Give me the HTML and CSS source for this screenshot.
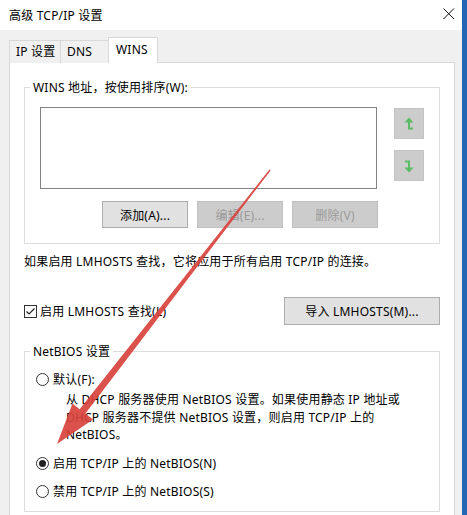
FILE: index.html
```html
<!DOCTYPE html>
<html lang="zh-CN">
<head>
    <meta charset="UTF-8">
    <title>高级 TCP/IP 设置</title>
    <link rel="stylesheet" href="styles.css">
</head>
<body>
    <div class="window">
        <div class="titlebar">
            <span class="title">高级 TCP/IP 设置</span>
            <span class="close">
                <svg width="12" height="12" viewBox="0 0 12 12"><path d="M0.5 0.5 L11 11 M11 0.5 L0.5 11" stroke="#111" stroke-width="1" fill="none"/></svg>
            </span>
        </div>

        <div class="main">
            <div class="tabs">
                <div class="tab tab-ip">IP 设置</div>
                <div class="tab tab-dns">DNS</div>
                <div class="tab tab-wins active">WINS</div>
            </div>

            <div class="panel">
                <fieldset class="group group-wins">
                    <legend>WINS 地址，按使用排序(W):</legend>
                    <div class="list-row">
                        <div class="listbox"></div>
                        <div class="move-btns">
                            <button class="move-btn">
                                <svg width="12" height="16" viewBox="0 0 12 16"><path d="M6 5 V12.5 H10" stroke="#5dbb66" stroke-width="2" fill="none"/><polygon points="1.5,6.5 6,1.5 10.5,6.5" fill="#5dbb66"/></svg>
                            </button>
                            <button class="move-btn">
                                <svg width="12" height="16" viewBox="0 0 12 16"><path d="M2 3.5 H6 V11" stroke="#5dbb66" stroke-width="2" fill="none"/><polygon points="1.5,9.5 6,14.5 10.5,9.5" fill="#5dbb66"/></svg>
                            </button>
                        </div>
                    </div>
                    <div class="btn-row">
                        <button class="btn">添加(A)...</button>
                        <button class="btn" disabled>编辑(E)...</button>
                        <button class="btn" disabled>删除(V)</button>
                    </div>
                </fieldset>

                <p class="info">如果启用 LMHOSTS 查找，它将应用于所有启用 TCP/IP 的连接。</p>

                <div class="lm-row">
                    <label class="check">
                        <span class="box">
                            <svg width="11" height="11" viewBox="0 0 11 11"><polyline points="1.5,5.5 4,8 9.5,2.5" stroke="#222" stroke-width="1.2" fill="none"/></svg>
                        </span>
                        启用 LMHOSTS 查找(L)
                    </label>
                    <button class="btn btn-import">导入 LMHOSTS(M)...</button>
                </div>

                <fieldset class="group group-netbios">
                    <legend>NetBIOS 设置</legend>
                    <label class="radio"><span class="dot"></span>默认(F):</label>
                    <p class="desc">从 DHCP 服务器使用 NetBIOS 设置。如果使用静态 IP 地址或<br>DHCP 服务器不提供 NetBIOS 设置，则启用 TCP/IP 上的<br>NetBIOS。</p>
                    <label class="radio on"><span class="dot"></span>启用 TCP/IP 上的 NetBIOS(N)</label>
                    <label class="radio"><span class="dot"></span>禁用 TCP/IP 上的 NetBIOS(S)</label>
                </fieldset>
            </div>
        </div>

        <!-- red annotation arrow drawn over the dialog -->
        <svg class="annotation" width="467" height="515" viewBox="0 0 467 515">
            <polygon points="269.4,169.6 270.6,170.4 85.4,413.6 93,419.5 57,444 72.5,403.5 79.6,409.2" fill="#d8423c" opacity="0.92"/>
        </svg>
    </div>
</body>
</html>
```

FILE: styles.css
```css
*{
    margin: 0;
    padding: 0;
    box-sizing: border-box;
}

body{
    background: #f0f0f0;
    font-family: "Noto Sans", "Noto Sans CJK SC", sans-serif;
    font-size: 12px;
    letter-spacing: 0.2px;
    color: #000;
}

.window{
    position: relative;
    width: 467px;
    height: 515px;
    overflow: hidden;
    border-right: 5px solid #2466b4;
    background: #f0f0f0;
}

.titlebar{
    height: 30px;
    background: #fff;
    display: flex;
    align-items: center;
    justify-content: space-between;
    padding: 0 7px 0 9px;
}

.title{
    line-height: 17px;
}

.close{
    display: flex;
    width: 12px;
    height: 12px;
    margin-top: -2px;
}

.main{
    padding: 0 7px 0 9px;
}

.tabs{
    display: flex;
    align-items: flex-end;
    height: 33px;
    margin-bottom: -1px;
}

.tab{
    height: 23px;
    line-height: 22px;
    padding-left: 6px;
    border: 1px solid #d9d9d9;
    border-bottom: none;
    background: #f0f0f0;
}

.tab-ip{
    width: 52px;
}

.tab-dns{
    width: 49px;
    margin-left: -1px;
}

.tab-wins{
    width: 50px;
    margin-left: -1px;
}

.tab.active{
    position: relative;
    height: 26px;
    line-height: 23px;
    background: #fff;
    padding-left: 7px;
}

.panel{
    background: #fff;
    border: 1px solid #d9d9d9;
    height: 460px;
    padding: 16px 14px 0 14px;
}

.group{
    border: 1px solid #dcdcdc;
    min-width: 0;
}

.group legend{
    padding: 0 3px;
    line-height: 17px;
}

.group-wins{
    padding: 0 15px 15px 15px;
}

.group-wins legend{
    margin-left: -10px;
}

.list-row{
    display: flex;
    margin-top: 11px;
}

.listbox{
    width: 338px;
    height: 82px;
    border: 1px solid #828282;
    background: #fff;
}

.move-btns{
    display: flex;
    flex-direction: column;
    gap: 11px;
    margin-left: 17px;
    margin-top: 1px;
}

.move-btn{
    width: 30px;
    height: 31px;
    border: 1px solid #c4c4c4;
    background: #cccccc;
    display: flex;
    justify-content: center;
    align-items: center;
}

.btn-row{
    width: 338px;
    display: flex;
    justify-content: flex-end;
    gap: 9px;
    margin-top: 12px;
}

.btn{
    font-family: inherit;
    font-size: 12px;
    letter-spacing: 0.2px;
    color: #000;
    width: 86px;
    height: 27px;
    background: #e1e1e1;
    border: 1px solid #adadad;
}

.btn:disabled{
    background: #cccccc;
    border-color: #bfbfbf;
    color: #9a9a9a;
}

.info{
    margin-top: 9px;
    line-height: 17px;
}

.lm-row{
    display: flex;
    justify-content: space-between;
    align-items: center;
    margin-top: 27px;
}

.check{
    display: flex;
    align-items: center;
    gap: 3px;
    line-height: 17px;
}

.box{
    width: 13px;
    height: 13px;
    border: 1px solid #333;
    background: #fff;
    display: flex;
}

.btn-import{
    width: 156px;
    height: 28px;
}

.group-netbios{
    margin-top: 18px;
    padding: 0 10px 11px 11px;
}

.group-netbios legend{
    margin-left: -6px;
}

.radio{
    display: flex;
    align-items: center;
    gap: 4px;
    line-height: 17px;
    margin-top: 11px;
}

.dot{
    width: 13px;
    height: 13px;
    border: 1px solid #333;
    border-radius: 50%;
    background: #fff;
    display: flex;
    justify-content: center;
    align-items: center;
}

.radio.on .dot::after{
    content: "";
    width: 7px;
    height: 7px;
    border-radius: 50%;
    background: #222;
}

.desc{
    margin-top: 3px;
    padding-left: 30px;
    line-height: 17.5px;
}

.annotation{
    position: absolute;
    left: 0;
    top: 0;
    pointer-events: none;
}
```
